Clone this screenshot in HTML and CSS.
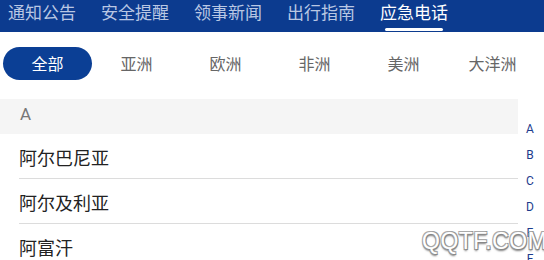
FILE: index.html
```html
<!DOCTYPE html>
<html lang="zh">
<head>
<meta charset="utf-8">
<link rel="stylesheet" href="styles.css">
</head>
<body>
<nav class="nav">
  <span class="tab">通知公告</span>
  <span class="tab">安全提醒</span>
  <span class="tab">领事新闻</span>
  <span class="tab">出行指南</span>
  <span class="tab active">应急电话</span>
</nav>
<div class="filters">
  <span class="chip on">全部</span>
  <span class="chip">亚洲</span>
  <span class="chip">欧洲</span>
  <span class="chip">非洲</span>
  <span class="chip">美洲</span>
  <span class="chip">大洋洲</span>
</div>
<div class="content">
  <div class="list">
    <div class="sec">A</div>
    <div class="row">阿尔巴尼亚</div>
    <div class="row">阿尔及利亚</div>
    <div class="row">阿富汗</div>
  </div>
  <div class="index">
    <span>A</span><span>B</span><span>C</span><span>D</span><span>E</span><span>F</span>
  </div>
</div>
<div class="mark">QQTF.COM</div>
</body>
</html>
```
FILE: styles.css
```css
html, body {
  margin: 0;
  padding: 0;
  background: #fff;
  overflow: hidden;
  height: 260px;
}
body {
  font-family: "Noto Sans CJK SC", "Noto Sans", sans-serif;
  position: relative;
}
.nav {
  height: 32px;
  background: #0c3b8f;
  display: flex;
  gap: 25px;
  padding-left: 8px;
  box-sizing: border-box;
}
.tab {
  position: relative;
  font-size: 17px;
  line-height: 24px;
  color: #b9c7e3;
  width: 68px;
  white-space: nowrap;
}
.tab.active {
  color: #fff;
}
.tab.active::after {
  content: "";
  position: absolute;
  left: 5px;
  width: 58px;
  top: 28px;
  height: 3px;
  border-radius: 2px;
  background: #fff;
}
.filters {
  display: flex;
  padding: 15px 0 0 3px;
  height: 33px;
}
.chip {
  width: 89px;
  flex: none;
  height: 33px;
  line-height: 33px;
  text-align: center;
  font-size: 16px;
  color: #666;
  border-radius: 17px;
}
.chip.on {
  background: #0b3f95;
  color: #fff;
}
.content {
  display: flex;
  margin-top: 19px;
}
.list {
  width: 518px;
  flex: none;
}
.sec {
  height: 35px;
  line-height: 30px;
  background: #f5f5f5;
  padding-left: 20px;
  font-size: 17px;
  color: #777;
  font-family: "Roboto", "Noto Sans", sans-serif;
}
.row {
  margin-left: 19px;
  height: 44px;
  line-height: 46px;
  border-bottom: 1px solid #dcdcdc;
  font-size: 18px;
  color: #222;
}
.index {
  flex: 1;
  display: flex;
  flex-direction: column;
  align-items: center;
  padding-top: 17px;
  padding-right: 2px;
}
.index span {
  height: 26px;
  line-height: 26px;
  font-size: 12px;
  color: #1d3c8c;
  font-family: "Roboto", "Noto Sans", sans-serif;
}
.mark {
  position: absolute;
  left: 422px;
  top: 228px;
  font-family: "Liberation Sans", sans-serif;
  font-size: 23px;
  color: #fff;
  letter-spacing: 0.5px;
  text-shadow: 1px 1px 0 #888, -1px -1px 0 #aaa, 1px -1px 0 #999, -1px 1px 0 #999, 0 2px 2px #777;
}
```
